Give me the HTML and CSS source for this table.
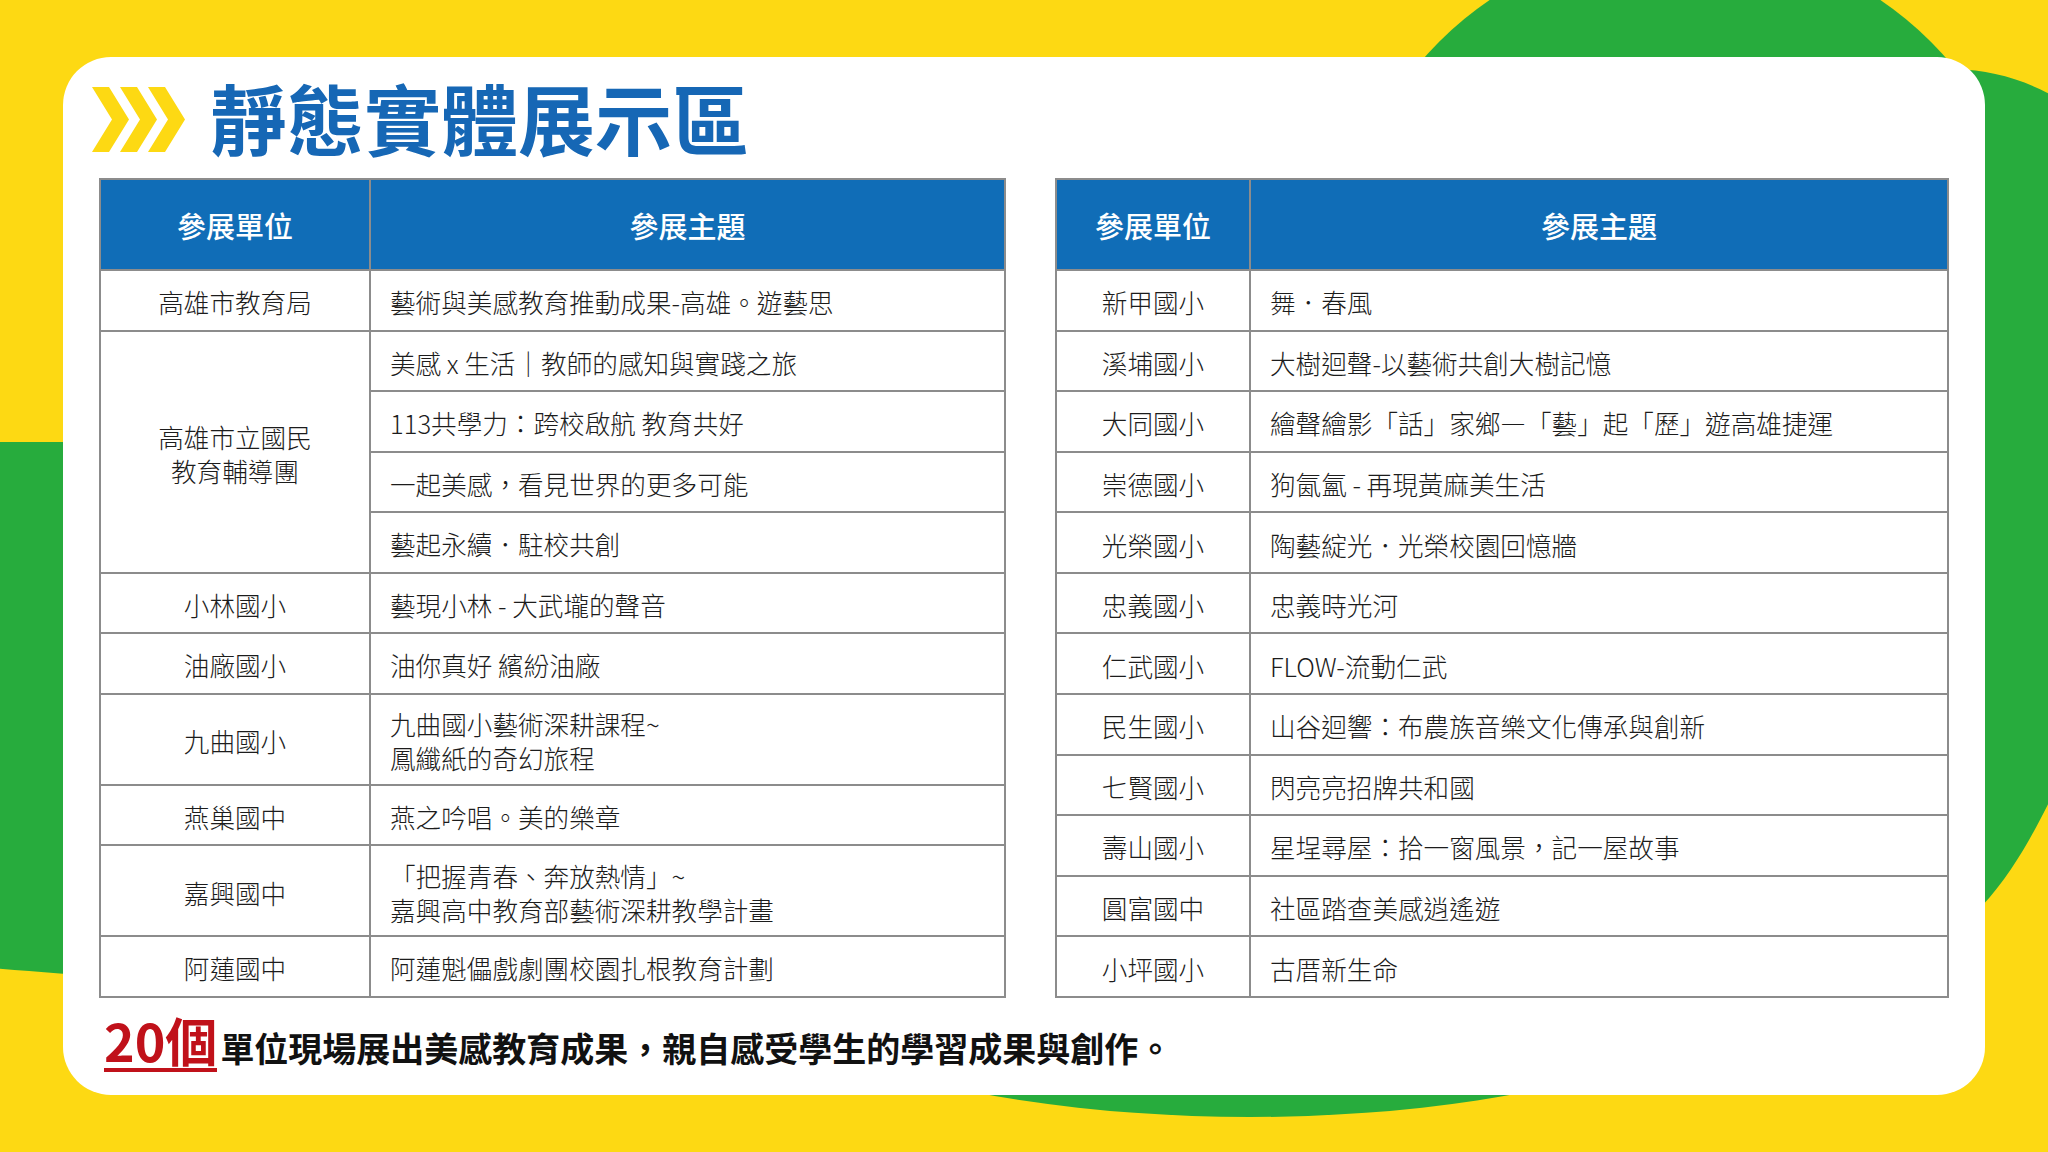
FILE: index.html
```html
<!DOCTYPE html>
<html lang="zh-Hant">
<head>
<meta charset="utf-8">
<title>靜態實體展示區</title>
<link rel="stylesheet" href="styles.css">
</head>
<body>
<div class="page">
  <svg class="bg" width="2048" height="1152" viewBox="0 0 2048 1152" aria-hidden="true">
    <circle cx="1685" cy="288" r="348" fill="#27ac3d"/>
    <path d="M1900 80 C1950 60 2010 70 2060 100 L2060 780 C2030 840 1990 930 1900 960 Z" fill="#27ac3d"/>
    <path d="M-10 442 L300 442 L300 990 C200 985 80 975 -10 968 Z" fill="#27ac3d"/>
    <ellipse cx="1250" cy="900" rx="593" ry="217" fill="#27ac3d"/>
  </svg>
  <div class="card">
    <div class="title-row">
      <svg class="chev" width="100" height="65" viewBox="0 0 100 65" aria-hidden="true">
        <polygon points="0,0 17,0 37,32.5 17,65 0,65 20,32.5" fill="#fdd913"/>
        <polygon points="28,0 45,0 65,32.5 45,65 28,65 48,32.5" fill="#fdd913"/>
        <polygon points="56,0 73,0 93,32.5 73,65 56,65 76,32.5" fill="#fdd913"/>
      </svg>
      <h1 class="title">靜態實體展示區</h1>
    </div>
    <div class="tables">
      <div class="grid grid-left">
        <div class="th">參展單位</div>
        <div class="th">參展主題</div>
        <div class="u">高雄市教育局</div>
        <div class="t">藝術與美感教育推動成果-高雄。遊藝思</div>
        <div class="u span4">高雄市立國民<br>教育輔導團</div>
        <div class="t">美感 x 生活｜教師的感知與實踐之旅</div>
        <div class="t">113共學力：跨校啟航 教育共好</div>
        <div class="t">一起美感，看見世界的更多可能</div>
        <div class="t">藝起永續．駐校共創</div>
        <div class="u">小林國小</div>
        <div class="t">藝現小林 - 大武壠的聲音</div>
        <div class="u">油廠國小</div>
        <div class="t">油你真好 繽紛油廠</div>
        <div class="u">九曲國小</div>
        <div class="t">九曲國小藝術深耕課程~<br>鳳纖紙的奇幻旅程</div>
        <div class="u">燕巢國中</div>
        <div class="t">燕之吟唱。美的樂章</div>
        <div class="u">嘉興國中</div>
        <div class="t">「把握青春、奔放熱情」~<br>嘉興高中教育部藝術深耕教學計畫</div>
        <div class="u">阿蓮國中</div>
        <div class="t">阿蓮魁儡戲劇團校園扎根教育計劃</div>
      </div>
      <div class="grid grid-right">
        <div class="th">參展單位</div>
        <div class="th">參展主題</div>
        <div class="u">新甲國小</div>
        <div class="t">舞．春風</div>
        <div class="u">溪埔國小</div>
        <div class="t">大樹迴聲-以藝術共創大樹記憶</div>
        <div class="u">大同國小</div>
        <div class="t">繪聲繪影「話」家鄉—「藝」起「歷」遊高雄捷運</div>
        <div class="u">崇德國小</div>
        <div class="t">狗氤氳 - 再現黃麻美生活</div>
        <div class="u">光榮國小</div>
        <div class="t">陶藝綻光．光榮校園回憶牆</div>
        <div class="u">忠義國小</div>
        <div class="t">忠義時光河</div>
        <div class="u">仁武國小</div>
        <div class="t">FLOW-流動仁武</div>
        <div class="u">民生國小</div>
        <div class="t">山谷迴響：布農族音樂文化傳承與創新</div>
        <div class="u">七賢國小</div>
        <div class="t">閃亮亮招牌共和國</div>
        <div class="u">壽山國小</div>
        <div class="t">星埕尋屋：拾一窗風景，記一屋故事</div>
        <div class="u">圓富國中</div>
        <div class="t">社區踏查美感逍遙遊</div>
        <div class="u">小坪國小</div>
        <div class="t">古厝新生命</div>
      </div>
    </div>
    <p class="note"><span class="count">20個</span><span class="note-text">單位現場展出美感教育成果，親自感受學生的學習成果與創作。</span></p>
  </div>
</div>
</body>
</html>
```

FILE: styles.css
```css
html, body {
  margin: 0;
  padding: 0;
}

body {
  font-family: "Noto Sans CJK TC", "Noto Sans", sans-serif;
}

.page {
  position: relative;
  width: 2048px;
  height: 1152px;
  overflow: hidden;
  background: #fdd913;
}

.bg {
  position: absolute;
  left: 0;
  top: 0;
}

.card {
  position: relative;
  box-sizing: border-box;
  width: 1922px;
  height: 1038px;
  margin: 57px 0 0 63px;
  padding: 0 36px;
  background: #ffffff;
  border-radius: 48px;
}

.title-row {
  display: flex;
  align-items: center;
  box-sizing: border-box;
  height: 121px;
  padding-bottom: 2px;
}

.chev {
  flex: none;
  margin-left: -7px;
  margin-top: 6px;
}

.title {
  margin: 0 0 0 18px;
  font-size: 77px;
  line-height: 1;
  font-weight: 700;
  color: #1667b5;
}

.tables {
  display: flex;
  align-items: flex-start;
  gap: 49px;
}

.grid {
  display: grid;
  gap: 2px;
  padding: 2px;
  background: #8c8c8c;
}

.grid-left {
  width: 907px;
  box-sizing: border-box;
  grid-template-columns: 268px 633px;
  grid-template-rows: 89px 58.5px 58.5px 58.5px 58.5px 58.5px 58.5px 58.5px 89px 58.5px 89px 58.5px;
}

.grid-right {
  width: 894px;
  box-sizing: border-box;
  grid-template-columns: 192px 696px;
  grid-template-rows: 89px repeat(12, 58.58px);
}

.th {
  display: flex;
  align-items: center;
  justify-content: center;
  background: #106db7;
  color: #ffffff;
  font-size: 29px;
  font-weight: 500;
}

.u,
.t {
  display: flex;
  align-items: center;
  box-sizing: border-box;
  padding-top: 4px;
  background: #ffffff;
  color: #1c1c1c;
  font-size: 25.6px;
  font-weight: 300;
  line-height: 34px;
}

.u {
  justify-content: center;
  text-align: center;
}

.t {
  padding-left: 19px;
}

.span4 {
  grid-row: span 4;
}

.note {
  display: flex;
  align-items: baseline;
  margin: 16px 0 0 5px;
  line-height: 1;
}

.count {
  display: inline-block;
  font-size: 52px;
  font-weight: 700;
  color: #c0111a;
  line-height: 1;
  padding-bottom: 2px;
  border-bottom: 4px solid #c0111a;
}

.note-text {
  margin-left: 3px;
  font-size: 34px;
  font-weight: 700;
  color: #111111;
}
```
